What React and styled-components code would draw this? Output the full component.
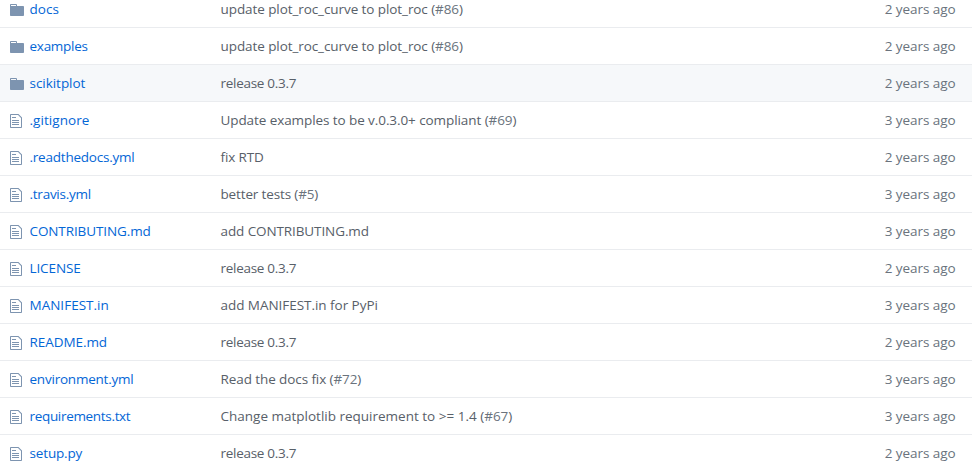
import React from "react";
import styled, { createGlobalStyle } from "styled-components";

const GlobalStyle = createGlobalStyle`
  body {
    margin: 0;
    overflow: hidden;
    background: #fff;
  }
`;

const FileTable = styled.main`
  height: 471px;
  overflow: hidden;
  display: flex;
  flex-direction: column;
  justify-content: flex-end;
  font-family: "Open Sans", "Noto Sans", sans-serif;
  font-size: 13.5px;
  line-height: 20px;
`;

const Row = styled.div`
  flex: none;
  box-sizing: border-box;
  height: 37px;
  display: grid;
  grid-template-columns: 19.5px 191px 1fr auto;
  align-items: start;
  padding: 8px 16.5px 0 10px;
  border-top: 1px solid #eaecef;
  background: ${(p) => (p.$active ? "#f6f8fa" : "#fff")};
`;

const IconCell = styled.span`
  display: flex;
  padding-top: 3px;
  color: #7d94b0;

  svg {
    display: block;
    fill: currentColor;
  }
`;

const Cell = styled.span`
  white-space: nowrap;
  letter-spacing: ${(p) => p.$tracking || 0}px;
`;

const Name = styled(Cell)`
  color: #0366d6;
`;

const Message = styled(Cell)`
  color: #586069;
`;

const Issue = styled.span`
  color: #6a737d;
`;

const Age = styled(Cell)`
  color: #6a737d;
`;

const FolderIcon = () => (
  <svg width="14" height="16" viewBox="0 0 14 16" aria-hidden="true">
    <path
      fillRule="evenodd"
      d="M13 4H7V3c0-.66-.31-1-1-1H1c-.55 0-1 .45-1 1v10c0 .55.45 1 1 1h12c.55 0 1-.45 1-1V5c0-.55-.45-1-1-1zM6 4H1V3h5v1z"
    />
  </svg>
);

const FileIcon = () => (
  <svg width="12" height="16" viewBox="0 0 12 16" aria-hidden="true">
    <path
      fillRule="evenodd"
      d="M6 5H2V4h4v1zM2 8h7V7H2v1zm0 2h7V9H2v1zm0 2h7v-1H2v1zm10-7.5V14c0 .55-.45 1-1 1H1c-.55 0-1-.45-1-1V2c0-.55.45-1 1-1h7.5L12 4.5zM11 5L8 2H1v12h10V5z"
    />
  </svg>
);

const files = [
  { folder: true, name: "docs", nt: 0.03, msg: "update plot_roc_curve to plot_roc", issue: "#86", mt: -0.08, years: 2 },
  { folder: true, name: "examples", nt: -0.26, msg: "update plot_roc_curve to plot_roc", issue: "#86", mt: -0.08, years: 2 },
  { folder: true, active: true, name: "scikitplot", nt: -0.04, msg: "release 0.3.7", mt: -0.28, years: 2 },
  { name: ".gitignore", nt: 0.05, msg: "Update examples to be v.0.3.0+ compliant", issue: "#69", mt: -0.08, years: 3 },
  { name: ".readthedocs.yml", nt: -0.22, msg: "fix RTD", mt: -0.14, years: 2 },
  { name: ".travis.yml", nt: -0.25, msg: "better tests", issue: "#5", mt: -0.14, years: 3 },
  { name: "CONTRIBUTING.md", nt: -0.1, msg: "add CONTRIBUTING.md", mt: -0.1, years: 3 },
  { name: "LICENSE", nt: -0.1, msg: "release 0.3.7", mt: -0.28, years: 2 },
  { name: "MANIFEST.in", nt: 0.01, msg: "add MANIFEST.in for PyPi", mt: -0.04, years: 3 },
  { name: "README.md", nt: -0.06, msg: "release 0.3.7", mt: -0.28, years: 2 },
  { name: "environment.yml", nt: -0.22, msg: "Read the docs fix", issue: "#72", mt: -0.09, years: 3 },
  { name: "requirements.txt", nt: -0.32, msg: "Change matplotlib requirement to >= 1.4", issue: "#67", mt: 0, years: 3 },
  { name: "setup.py", nt: -0.15, msg: "release 0.3.7", mt: -0.28, years: 2 },
];

export default function App() {
  return (
    <>
      <GlobalStyle />
      <FileTable>
        {files.map((f) => (
          <Row key={f.name} $active={f.active}>
            <IconCell>{f.folder ? <FolderIcon /> : <FileIcon />}</IconCell>
            <Name $tracking={f.nt}>{f.name}</Name>
            <Message $tracking={f.mt}>
              {f.msg}
              {f.issue && (
                <>
                  {" ("}
                  <Issue>{f.issue}</Issue>)
                </>
              )}
            </Message>
            <Age $tracking={-0.06}>{f.years} years ago</Age>
          </Row>
        ))}
      </FileTable>
    </>
  );
}
